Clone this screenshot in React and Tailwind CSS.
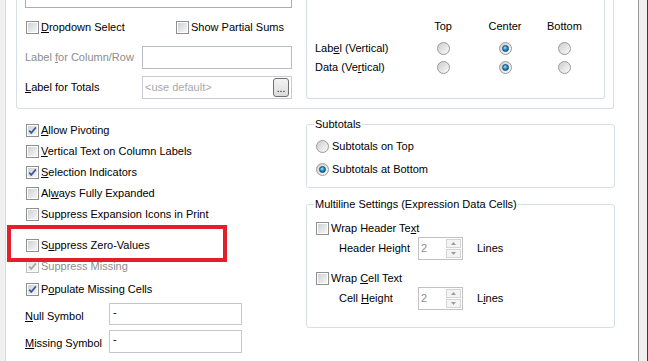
import React from "react";

function Check({ checked, disabled }) {
  return (
    <span
      className={`relative block h-[13px] w-[13px] shrink-0 border bg-white p-[1px] ${
        disabled ? "border-[#bdbdbd]" : "border-[#8e8f8f]"
      }`}
    >
      <span
        className={`block h-full w-full bg-linear-to-br ${
          disabled ? "from-[#e6e6e6] to-[#f7f7f7]" : "from-[#cfd2d6] to-[#f6f6f6]"
        }`}
      />
      {checked && (
        <svg className="absolute inset-0" width="11" height="11" viewBox="0 0 11 11">
          <path
            d="M2.2 5.6 L4.3 7.9 L8.9 2.4"
            fill="none"
            stroke={disabled ? "#a9a9a9" : "#3e5b9a"}
            strokeWidth="1.7"
          />
        </svg>
      )}
    </span>
  );
}

function Radio({ on }) {
  return (
    <span className="flex h-[13px] w-[13px] shrink-0 items-center justify-center rounded-full border border-[#9a9a9a] bg-linear-to-br from-[#cdcdcd] to-[#fbfbfb]">
      {on && (
        <span className="h-[7px] w-[7px] rounded-full border border-[#1d4668] bg-[radial-gradient(circle_at_40%_35%,#a6e6ff_0%,#1b93d4_45%,#0b4c82_100%)]" />
      )}
    </span>
  );
}

function CheckRow({ checked, disabled, children }) {
  return (
    <label className="flex h-[13px] items-center gap-[2px]">
      <Check checked={checked} disabled={disabled} />
      <span className={disabled ? "text-[#8d8d8d]" : ""}>{children}</span>
    </label>
  );
}

function Tri({ down }) {
  return (
    <svg width="5" height="3" viewBox="0 0 5 3">
      <polygon points={down ? "0,0 5,0 2.5,3" : "0,3 5,3 2.5,0"} fill="#9c9c9c" />
    </svg>
  );
}

function Spin() {
  return (
    <div className="flex h-[23px] w-[45px] border border-[#c2c2c2] bg-white">
      <span className="flex-1 pl-[2px] leading-[21px] text-[#8d8d8d]">2</span>
      <div className="flex w-[17px] flex-col gap-[1px] p-[1px]">
        <span className="flex flex-1 items-center justify-center border border-[#d5d5d5] bg-[#f4f4f4]">
          <Tri />
        </span>
        <span className="flex flex-1 items-center justify-center border border-[#d5d5d5] bg-[#f4f4f4]">
          <Tri down />
        </span>
      </div>
    </div>
  );
}

export default function App() {
  return (
    <div className="flex h-[361px] w-[648px] overflow-hidden bg-white font-['Liberation_Sans',Arial,sans-serif] text-[11px] leading-[13px] text-black">
      <div className="w-[5px] shrink-0 bg-[#f0f0f0]" />
      <div className="w-px shrink-0 bg-[#d9d9d9]" />

      <div className="w-[632px] shrink-0">
        {/* top group */}
        <div className="ml-[10px] flex h-[109px] w-[598px] rounded-b-[3px] border-x border-b border-[#d5dfe5]">
          <div className="w-[289px] shrink-0 pl-[8px]">
            <div className="h-[8px] w-[267px] border-x border-b border-[#abadb3]" />
            <div className="mt-[13px] ml-[1px] flex">
              <div className="w-[150px]">
                <CheckRow>
                  <u>D</u>ropdown Select
                </CheckRow>
              </div>
              <CheckRow>Show Partial Sums</CheckRow>
            </div>
            <div className="mt-[12px] flex items-center">
              <span className="w-[117px] text-[#8d8d8d]">
                Label <u>f</u>or Column/Row
              </span>
              <div className="h-[23px] w-[150px] border border-[#b8bcc4] bg-white" />
            </div>
            <div className="mt-[7px] flex items-center">
              <span className="w-[117px]">
                <u>L</u>abel for Totals
              </span>
              <div className="flex h-[23px] w-[150px] items-center justify-between border border-[#c9cbd0] bg-white pl-[2px] pr-[2px]">
                <span className="text-[#a9a9a9]">&lt;use default&gt;</span>
                <span className="flex h-[19px] w-[16px] items-end justify-center rounded-[3px] border border-[#707070] bg-linear-to-b from-[#f3f3f3] to-[#dcdcdc] pb-[3px] text-[10px] leading-[8px]">
                  ...
                </span>
              </div>
            </div>
          </div>

          <div className="h-[99px] w-[299px] shrink-0 rounded-b-[3px] border-x border-b border-[#d5dfe5] pl-[8px] pt-[20px]">
            <div className="grid h-[13px] grid-cols-[108px_40px_84px_34px] items-center text-center">
              <span />
              <span>Top</span>
              <span>Center</span>
              <span>Bottom</span>
            </div>
            <div className="mt-[9px] grid h-[13px] grid-cols-[108px_40px_84px_34px] items-center justify-items-center">
              <span className="justify-self-start">
                Lab<u>e</u>l (Vertical)
              </span>
              <Radio />
              <Radio on />
              <Radio />
            </div>
            <div className="mt-[6px] grid h-[13px] grid-cols-[108px_40px_84px_34px] items-center justify-items-center">
              <span className="justify-self-start">
                Data (Ve<u>r</u>tical)
              </span>
              <Radio />
              <Radio on />
              <Radio />
            </div>
          </div>
        </div>

        {/* lower part */}
        <div className="flex">
          <div className="relative w-[300px] shrink-0 pl-[20px] pt-[15px]">
            <div className="flex flex-col gap-[8px]">
              <CheckRow checked>
                <u>A</u>llow Pivoting
              </CheckRow>
              <CheckRow>
                <u>V</u>ertical Text on Column Labels
              </CheckRow>
              <CheckRow checked>
                <u>S</u>election Indicators
              </CheckRow>
              <CheckRow>
                Al<u>w</u>ays Fully Expanded
              </CheckRow>
              <CheckRow>Suppress Expansion Icons in Print</CheckRow>
            </div>
            <div className="mt-[18px]">
              <CheckRow>
                S<u>u</u>ppress Zero-Values
              </CheckRow>
            </div>
            <div className="mt-[8px]">
              <CheckRow checked disabled>
                Suppress Missing
              </CheckRow>
            </div>
            <div className="mt-[10px]">
              <CheckRow checked>
                P<u>o</u>pulate Missing Cells
              </CheckRow>
            </div>
            <div className="-ml-[1px] mt-[7px] flex items-start">
              <span className="w-[84px] pt-[7px]">
                <u>N</u>ull Symbol
              </span>
              <div className="h-[22px] w-[133px] border border-[#c4c8ce] bg-white pl-[3px] pt-[2px]">-</div>
            </div>
            <div className="-ml-[1px] mt-[5px] flex items-start">
              <span className="w-[84px] pt-[7px]">
                <u>M</u>issing Symbol
              </span>
              <div className="h-[23px] w-[133px] border border-[#c4c8ce] bg-white pl-[3px] pt-[2px]">-</div>
            </div>

            <div className="absolute left-[1px] top-[116px] h-[37px] w-[220px] border-4 border-[#e3202a]" />
          </div>

          <div className="w-[309px] shrink-0">
            <fieldset className="mt-[9px] rounded-[3px] border border-[#d5dfe5] px-[9px] pb-[11px]">
              <legend className="-ml-[2px] px-[1px]">Subtotals</legend>
              <label className="mt-[9px] flex h-[13px] items-center gap-[3px]">
                <Radio />
                <span>Subtotals on Top</span>
              </label>
              <label className="mt-[10px] flex h-[13px] items-center gap-[3px]">
                <Radio on />
                <span>Subtotals at Bottom</span>
              </label>
            </fieldset>

            <fieldset className="mt-[10px] rounded-[3px] border border-[#d5dfe5] px-[9px] pb-[17px]">
              <legend className="-ml-[2px] px-[1px]">Multiline Settings (Expression Data Cells)</legend>
              <div className="mt-[11px]">
                <CheckRow>
                  Wrap Header Te<u>x</u>t
                </CheckRow>
              </div>
              <div className="mt-[2px] flex items-center pl-[23px]">
                <span className="w-[79px]">
                  Header Hei<u>g</u>ht
                </span>
                <Spin />
                <span className="ml-[14px]">Lines</span>
              </div>
              <div className="mt-[12px]">
                <CheckRow>
                  Wrap <u>C</u>ell Text
                </CheckRow>
              </div>
              <div className="mt-[2px] flex items-center pl-[23px]">
                <span className="w-[79px]">
                  Cell <u>H</u>eight
                </span>
                <Spin />
                <span className="ml-[14px]">
                  L<u>i</u>nes
                </span>
              </div>
            </fieldset>
          </div>
        </div>
      </div>

      <div className="w-px shrink-0 bg-[#9a9a9a]" />
      <div className="w-[8px] shrink-0 bg-[#f0f0f0]" />
      <div className="w-px shrink-0 bg-[#3c3c3c]" />
    </div>
  );
}
